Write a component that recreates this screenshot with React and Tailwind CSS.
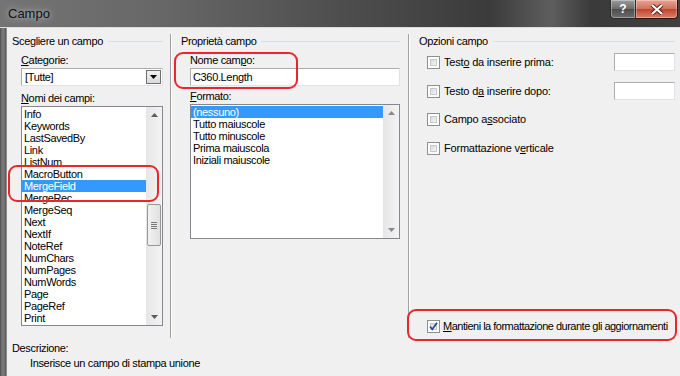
import React from "react";

const campi = [
  "Info",
  "Keywords",
  "LastSavedBy",
  "Link",
  "ListNum",
  "MacroButton",
  "MergeField",
  "MergeRec",
  "MergeSeq",
  "Next",
  "NextIf",
  "NoteRef",
  "NumChars",
  "NumPages",
  "NumWords",
  "Page",
  "PageRef",
  "Print",
];

const formati = [
  "(nessuno)",
  "Tutto maiuscole",
  "Tutto minuscole",
  "Prima maiuscola",
  "Iniziali maiuscole",
];

const Triangle = ({ up, color = "#5b5b5b" }) => (
  <svg width="7" height="4" viewBox="0 0 7 4">
    <polygon points={up ? "0,4 7,4 3.5,0" : "0,0 7,0 3.5,4"} fill={color} />
  </svg>
);

const GroupTitle = ({ children }) => (
  <div className="flex h-[14px] items-center gap-[5px]">
    <span className="whitespace-nowrap leading-[14px]">{children}</span>
    <div className="h-px flex-1 bg-[#d5dfe5]" />
  </div>
);

const Check = ({ checked }) => (
  <div className="relative h-[13px] w-[13px] shrink-0 border border-[#8e8f8f] bg-white p-[2px]">
    <div className="h-full w-full border border-[#c4c7cc] bg-[linear-gradient(135deg,#d7d9dc,#f7f7f7)]" />
    {checked && (
      <svg className="absolute inset-0" width="11" height="11" viewBox="0 0 11 11">
        <path d="M2 5.5 L4.3 8.3 L9 1.8" fill="none" stroke="#2c4b94" strokeWidth="1.7" />
      </svg>
    )}
  </div>
);

const Option = ({ children, input }) => (
  <div className="flex h-[18px] items-center">
    <Check />
    <span className="ml-[4px] leading-[14px] tracking-[-0.2px]">{children}</span>
    {input && (
      <div className="ml-auto h-[18px] w-[61px] border border-[#abadb3] border-b-[#dfe3e9] border-r-[#dfe3e9] bg-white" />
    )}
  </div>
);

const ScrollBar = ({ thumb, arrow = "#5b5b5b" }) => (
  <div className="flex w-[16px] shrink-0 flex-col bg-[linear-gradient(to_right,#e6e6e6,#f3f3f3)]">
    <div className="flex h-[16px] items-center justify-center">
      <Triangle up color={arrow} />
    </div>
    <div className="flex-1">
      {thumb && (
        <div className="mx-[1px] mt-[81px] flex h-[42px] flex-col items-center justify-center gap-[1px] rounded-[2px] border border-[#979797] bg-[linear-gradient(to_right,#f2f2f2,#e1e1e1)]">
          <div className="h-px w-[6px] bg-[#7a7a7a]" />
          <div className="h-px w-[6px] bg-[#7a7a7a]" />
          <div className="h-px w-[6px] bg-[#7a7a7a]" />
          <div className="h-px w-[6px] bg-[#7a7a7a]" />
        </div>
      )}
    </div>
    <div className="flex h-[16px] items-center justify-center">
      <Triangle color={arrow} />
    </div>
  </div>
);

const Separator = () => (
  <div className="w-[2px] shrink-0 border-l border-r border-l-[#a0a0a0] border-r-white" />
);

export default function App() {
  return (
    <div className="relative flex h-[376px] w-[680px] flex-col overflow-hidden bg-[#f0f0f0] font-['Liberation_Sans',Arial,sans-serif] text-[11px] tracking-[-0.35px] text-black">
      {/* barra del titolo */}
      <div className="flex h-[28px] shrink-0 border-b border-[#dcdcdc] bg-[linear-gradient(to_right,#747474_0%,#666_25%,#4e4e4e_50%,#3b3b3b_72%,#5e5e5e_81%,#3a3a3a_87%,#404040_100%)]">
        <span className="ml-[8px] self-center text-[13px] tracking-normal text-[#111] [text-shadow:0_0_6px_rgba(230,230,230,0.9)]">
          Campo
        </span>
        <div className="flex-1" />
        <div className="mr-[2px] flex h-[19px]">
          <div className="flex w-[26px] items-center justify-center rounded-bl-[4px] border border-t-0 border-[#2a2a2a] bg-[linear-gradient(#9c9c9c,#6a6a6a_50%,#4d4d4d_51%,#6d6d6d)] text-[12px] font-bold tracking-normal text-white shadow-[inset_0_0_0_1px_rgba(255,255,255,0.35)]">
            ?
          </div>
          <div className="flex w-[42px] items-center justify-center rounded-br-[4px] border border-l-0 border-t-0 border-[#3a1410] bg-[linear-gradient(#e8a596,#d0705c_50%,#c0432d_51%,#d9826c)] shadow-[inset_0_0_0_1px_rgba(255,255,255,0.3)]">
            <svg width="14" height="11" viewBox="0 0 14 11">
              <path d="M2 1 L12 10 M12 1 L2 10" stroke="#5a1d14" strokeWidth="4" />
              <path d="M2 1 L12 10 M12 1 L2 10" stroke="#fff" strokeWidth="2.2" />
            </svg>
          </div>
        </div>
      </div>

      <div className="flex flex-1">
        <div className="w-[6px] shrink-0 bg-[linear-gradient(to_right,#3c3c3c_0px,#6f6f6f_1px,#7a7a7a_4px,#555_6px)]" />
        <div className="flex flex-1 flex-col border-l border-[#8c8c8c]">
          <div className="flex h-[310px] pt-[6px]">
            {/* Scegliere un campo */}
            <div className="flex w-[163px] shrink-0 flex-col pl-[5px] pr-[7px]">
              <GroupTitle>Scegliere un campo</GroupTitle>
              <div className="flex flex-col pl-[9px]">
                <div className="mt-[5px] leading-[14px]">
                  <span className="underline">C</span>ategorie:
                </div>
                <div className="mt-[1px] flex h-[18px] items-center border border-[#abadb3] border-b-[#dfe3e9] border-r-[#dfe3e9] bg-white pl-[3px]">
                  <span className="flex-1">[Tutte]</span>
                  <div className="mr-[1px] flex h-[14px] w-[15px] items-center justify-center border border-[#707070] bg-[linear-gradient(#f2f2f2,#dadada)]">
                    <Triangle color="#000" />
                  </div>
                </div>
                <div className="mt-[5px] leading-[14px]">
                  <span className="underline">N</span>omi dei campi:
                </div>
                <div className="mt-[1px] flex h-[220px] border border-[#828790] bg-white">
                  <div className="flex flex-1 flex-col overflow-hidden pt-[1px]">
                    {campi.map((c) => (
                      <div
                        key={c}
                        className={`h-[12px] whitespace-nowrap pl-[2px] leading-[12px] ${
                          c === "MergeField" ? "bg-[#3399ff] text-white" : ""
                        }`}
                      >
                        {c}
                      </div>
                    ))}
                  </div>
                  <ScrollBar thumb />
                </div>
              </div>
            </div>
            <Separator />

            {/* Proprietà campo */}
            <div className="flex w-[236px] shrink-0 flex-col pl-[9px] pr-[8px]">
              <GroupTitle>Proprietà campo</GroupTitle>
              <div className="flex flex-col pl-[9px]">
                <div className="mt-[5px] leading-[14px]">
                  Nome cam<span className="underline">p</span>o:
                </div>
                <div className="mt-[1px] flex h-[18px] items-center border border-[#abadb3] border-b-[#dfe3e9] border-r-[#dfe3e9] bg-white pl-[2px]">
                  C360.Length
                </div>
                <div className="mt-[3px] leading-[14px]">
                  <span className="underline">F</span>ormato:
                </div>
                <div className="mt-[1px] flex h-[135px] border border-[#828790] bg-white">
                  <div className="flex flex-1 flex-col pt-[1px]">
                    {formati.map((f, i) => (
                      <div
                        key={f}
                        className={`h-[12px] whitespace-nowrap pl-[2px] leading-[12px] ${
                          i === 0 ? "bg-[#3399ff] text-white" : ""
                        }`}
                      >
                        {f}
                      </div>
                    ))}
                  </div>
                  <ScrollBar arrow="#8a8a8a" />
                </div>
              </div>
            </div>
            <Separator />

            {/* Opzioni campo */}
            <div className="flex flex-1 flex-col pl-[9px] pr-[5px]">
              <GroupTitle>Opzioni campo</GroupTitle>
              <div className="flex flex-1 flex-col pl-[8px]">
                <div className="mt-[5px]">
                  <Option input>
                    Test<span className="underline">o</span> da inserire prima:
                  </Option>
                </div>
                <div className="mt-[11px]">
                  <Option input>
                    Testo d<span className="underline">a</span> inserire dopo:
                  </Option>
                </div>
                <div className="mt-[10px]">
                  <Option>
                    Campo a<span className="underline">s</span>sociato
                  </Option>
                </div>
                <div className="mt-[11px]">
                  <Option>
                    Formattazione v<span className="underline">e</span>rticale
                  </Option>
                </div>
                <div className="relative z-10 mb-[3px] mt-auto flex h-[18px] items-center">
                  <Check checked />
                  <span className="ml-[3px] whitespace-nowrap leading-[14px] tracking-[-0.5px]">
                    <span className="underline">M</span>antieni la formattazione durante gli aggiornamenti
                  </span>
                </div>
              </div>
            </div>
          </div>

          {/* Descrizione */}
          <div className="mt-[3px] pl-[5px] leading-[14px]">Descrizione:</div>
          <div className="mt-[1px] pl-[23px] leading-[14px]">
            Inserisce un campo di stampa unione
          </div>
        </div>
      </div>

      {/* riquadri rossi */}
      <div className="absolute left-[8px] top-[165px] h-[37px] w-[151px] rounded-[9px] border-2 border-[#e8262b]" />
      <div className="absolute left-[174px] top-[52px] h-[37px] w-[124px] rounded-[9px] border-2 border-[#e8262b]" />
      <div className="absolute left-[407px] top-[309px] h-[32px] w-[270px] rounded-[9px] border-2 border-[#e8262b] bg-[#f0f0f0]" />
    </div>
  );
}
